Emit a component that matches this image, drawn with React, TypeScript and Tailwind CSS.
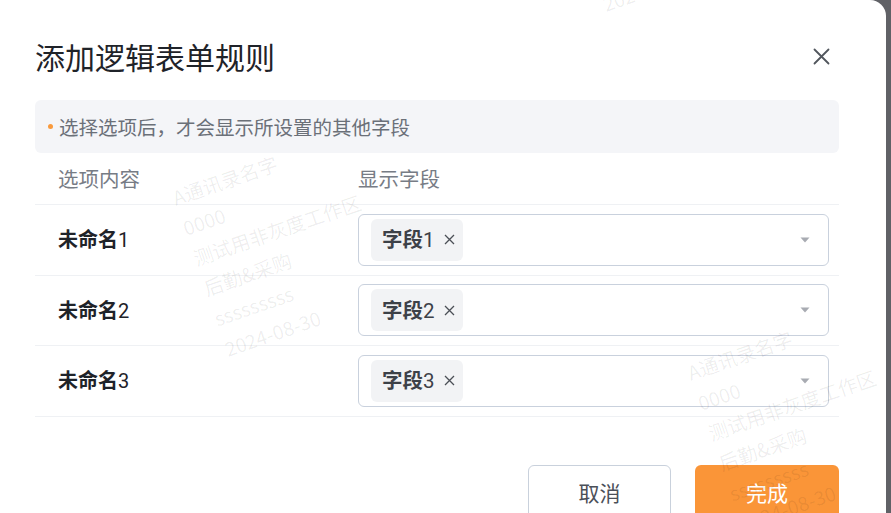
const rows = [
  { label: "未命名", no: "1", field: "字段1" },
  { label: "未命名", no: "2", field: "字段2" },
  { label: "未命名", no: "3", field: "字段3" },
];

const watermarkLines = ["A通讯录名字", "0000", "测试用非灰度工作区", "后勤&采购", "sssssssss", "2024-08-30"];

function Watermark({ className }: { className: string }) {
  return (
    <div
      className={`pointer-events-none absolute origin-top-left -rotate-[19deg] select-none whitespace-nowrap text-[19.5px] leading-[32px] text-black/[0.07] font-['Noto_Sans_CJK_SC','Noto_Sans',sans-serif] ${className}`}
    >
      {watermarkLines.map((line) => (
        <div key={line}>{line}</div>
      ))}
    </div>
  );
}

function Caret() {
  return (
    <svg width="10" height="6" viewBox="0 0 10 6" className="shrink-0">
      <path d="M0.5 0.5 L9.5 0.5 L5 5.5 Z" fill="#a8abb2" />
    </svg>
  );
}

export default function App() {
  return (
    <div className="relative h-[513px] w-[891px] overflow-hidden bg-[#606166] font-['Noto_Sans_CJK_SC','Noto_Sans',sans-serif]">
      <div className="relative h-[513px] w-[886px] overflow-hidden rounded-tr-[16px] bg-white pl-[35px] pr-[47px]">
        {/* Header */}
        <div className="flex items-center justify-between pt-[38px]">
          <h1 className="text-[30px] font-normal leading-[36px] text-[#1f2329]">添加逻辑表单规则</h1>
          <button className="mr-[9px] flex h-[18px] w-[18px] items-center justify-center">
            <svg width="17" height="17" viewBox="0 0 17 17">
              <path d="M1.5 1.5 L15.5 15.5 M15.5 1.5 L1.5 15.5" stroke="#51565d" strokeWidth="1.8" strokeLinecap="round" />
            </svg>
          </button>
        </div>

        {/* Tip */}
        <div className="mt-[26px] flex h-[53px] items-center gap-[6px] rounded-[6px] bg-[#f4f5f8] pl-[13px]">
          <span className="h-[5px] w-[5px] rounded-full bg-[#f99a3d]" />
          <span className="text-[19.5px] text-[#6b7078]">选择选项后，才会显示所设置的其他字段</span>
        </div>

        {/* Table */}
        <div className="flex h-[52px] items-center border-b border-[#eff1f4] text-[20.5px] text-[#777c85]">
          <div className="w-[323px] pl-[23px]">选项内容</div>
          <div>显示字段</div>
        </div>
        {rows.map((row) => (
          <div key={row.field} className="flex h-[70.5px] items-center border-b border-[#eff1f4]">
            <div className="w-[323px] pl-[23px] text-[20px] font-bold text-[#1f2329]">
              {row.label}
              <span className="font-normal font-['Roboto',sans-serif]">{row.no}</span>
            </div>
            <div className="flex h-[52px] w-[471px] items-center justify-between rounded-[6px] border border-[#c9d1dd] pl-[12px] pr-[18px]">
              <span className="flex h-[42px] items-center gap-[9px] rounded-[6px] bg-[#f2f3f5] pl-[11px] pr-[8px]">
                <span className="text-[20.5px] font-bold text-[#3d4148]">
                  字段<span className="font-['Roboto',sans-serif] font-normal">{row.field.slice(2)}</span>
                </span>
                <svg width="11" height="11" viewBox="0 0 11 11">
                  <path d="M1 1 L10 10 M10 1 L1 10" stroke="#4b4f56" strokeWidth="1.3" />
                </svg>
              </span>
              <Caret />
            </div>
          </div>
        ))}

        {/* Footer */}
        <div className="mt-[48px] flex justify-end gap-[24px]">
          <button className="h-[56px] w-[143px] rounded-[6px] border border-[#c9d1dc] bg-white text-[21px] text-[#4b5059]">
            取消
          </button>
          <button className="h-[56px] w-[144px] rounded-[6px] bg-[#fa9538] text-[21px] text-white">完成</button>
        </div>

        <Watermark className="left-[168px] top-[183px]" />
        <Watermark className="left-[683px] top-[358px]" />
        <Watermark className="left-[546px] top-[-162px]" />
      </div>
    </div>
  );
}
